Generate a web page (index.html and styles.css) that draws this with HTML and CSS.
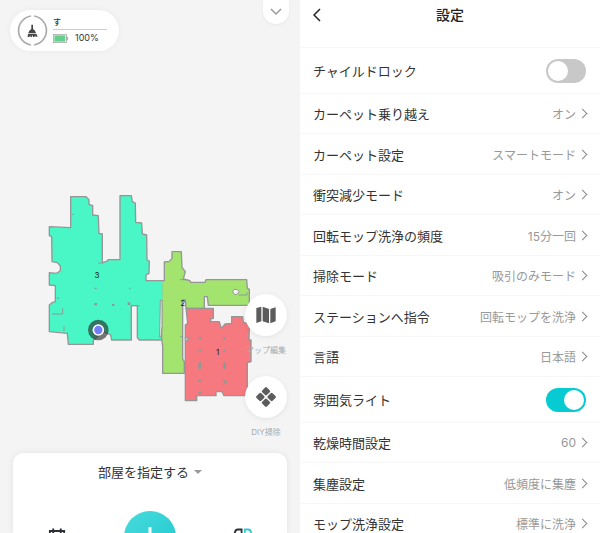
FILE: index.html
```html
<!DOCTYPE html>
<html lang="ja">
<head>
    <meta charset="UTF-8">
    <meta name="viewport" content="width=device-width, initial-scale=1.0">
    <title>設定</title>
    <link rel="stylesheet" href="styles.css">
</head>
<body>
    <!-- Map screen -->
    <section class="map-screen">
        <div class="top-bar">
            <div class="status">
                <svg class="status-ring" viewBox="0 0 93 93" aria-hidden="true">
                    <path d="M42 3A44 44 0 0 0 42 90M51 3A44 44 0 0 1 51 90" fill="none" stroke="#aaa" stroke-width="5"/>
                    <path d="M43 29h5v13l6 5 3 7H34l3-7 6-5z" fill="#444"/>
                    <path d="M33 56h25l4 9h-7v-5l-3 6h-4v-6l-4 6h-4v-6l-3 6h-5z" fill="#444"/>
                </svg>
                <div class="status-info">
                    <div class="status-name">す</div>
                    <div class="status-battery">
                        <svg class="battery" viewBox="0 0 45 27" aria-hidden="true">
                            <rect x="1" y="1" width="39" height="25" fill="#fff" stroke="#999" stroke-width="2"/>
                            <rect x="4" y="4" width="33" height="19" fill="#65d08d"/>
                            <path d="M41 8h3v11h-3z" fill="#888"/>
                        </svg>
                        <span>100%</span>
                    </div>
                </div>
            </div>
            <button class="pull-down" aria-label="開く">
                <svg viewBox="0 0 12 8"><path d="M1 1l5 5 5-5" fill="none" stroke="#999" stroke-width="1.500"/></svg>
            </button>
        </div>

        <div class="map-area">
            <svg class="map" viewBox="0 0 660 660">
                <g stroke="#969696" stroke-width="4" stroke-linejoin="round">
                    <path fill="#48f6c6" d="M92 35H138L147 44V58L158 62V90L175 92L177 145L187 147V233L200 229L205 224H240V32H274L277 50L286 54L287 112L305 114L307 147L320 150L321 225L328 228L327 265L318 270V287H366V465H298L292 458V362H274V465H215L212 450L190 440L160 465V478H85L82 445L28 440V360L36 353L46 350V302L28 300V263L50 265L61 257V243L52 233L36 230L35 155L28 152V125L92 128Z"/>
                    <path fill="#a3e46e" d="M373 231L388 229L396 220V200H424L426 247L436 260L430 282L450 287L452 292H495L498 284H620L622 310L628 313V361H505L502 335H493V370H438L436 345H428V522L433 530V565H368V485L365 460V287H373Z"/>
                    <path fill="#f5797e" d="M438 370H520V400L512 402V410H538L544 430L555 417L575 415V395H608L610 412L623 415L628 427L627 465H633V530L622 533V632H552L546 620H528V632H470V647H436V420L443 415Z"/>
                </g>
                <path fill="#48f6c6" d="M360 289h7v56h-7z"/>
                <path fill="#f4f4f4" stroke="#969696" stroke-width="3" d="M361 346h5v78l-3 32h-4zM578 318l4-5 10 1 5 5-3 7-8 3-5-3zM437 455l7 4v4l-7 5z"/>
                <path fill="none" stroke="#8b9a96" stroke-width="3" d="M36 387H68V370M72 424v14M175 234h15M274 362h24M597 330h24V322M420 284h22M421 455h8M434 459h18"/>
                <g fill="#8b9a96">
                    <path d="M164 308h6v4h-6zM267 308h4v5h-4zM163 354h8v7h-8zM216 357h7v6h-7zM263 352h8v8h-8zM97 86h4v4h-4zM51 337h5v4h-5z"/>
                    <path d="M476 457h9v6h-9zM549 457h8v6h-8zM476 494h8v5h-8zM550 495h7v5h-7zM475 534l8-3v20h-8zM549 534l9-3v20h-8zM475 584h8v7h-8zM549 583l4 1 9 9-4 4-9-9zM475 620h8v7h-8z"/>
                </g>
                <circle cx="175" cy="435" r="31" fill="#222" fill-opacity=".6"/>
                <circle cx="175" cy="435" r="15" fill="#727dfa" stroke="#fff" stroke-width="5"/>
                <text class="room" x="171" y="280">3</text>
                <text class="room" x="428" y="362">2</text>
                <text class="room" x="533" y="511">1</text>
            </svg>

            <div class="tools">
                <button class="tool">
                    <span class="tool-circle">
                        <svg viewBox="0 0 60 50" fill="#5c5c5c"><path d="M1 4L16 0V44L1 49zM20 0L39 7V50L20 44zM43 7L59 2V44L43 50z"/></svg>
                    </span>
                    マップ編集
                </button>
                <button class="tool">
                    <span class="tool-circle">
                        <svg viewBox="0 0 60 60" fill="#5c5c5c">
                            <rect x="20" y="3" width="20" height="20" rx="4" transform="rotate(45 30 13)"/>
                            <rect x="3" y="20" width="20" height="20" rx="4" transform="rotate(45 13 30)"/>
                            <rect x="37" y="20" width="20" height="20" rx="4" transform="rotate(45 47 30)"/>
                            <rect x="20" y="37" width="20" height="20" rx="4" transform="rotate(45 30 47)"/>
                        </svg>
                    </span>
                    DIY掃除
                </button>
            </div>
        </div>

        <div class="card">
            <button class="card-title">部屋を指定する <span class="caret"></span></button>
            <div class="actions">
                <button class="action" aria-label="予約">
                    <svg viewBox="0 0 48 48" fill="none" stroke="#2b2f38" stroke-width="5"><path d="M5 8H43V43H5zM14 1V14M34 1V14"/></svg>
                </button>
                <button class="start" aria-label="開始">
                    <svg viewBox="0 0 20 20"><path d="M10 1V19M1 10H19" stroke="#fff" stroke-width="3" stroke-linecap="round"/></svg>
                </button>
                <button class="action" aria-label="モード">
                    <svg viewBox="0 0 56 48" fill="none" stroke-width="5"><path d="M24 3H13Q6 3 4 16H24zM4 16V44H24V16" stroke="#2b2f38"/><path d="M33 44V3H42Q51 3 51 15T42 27H33" stroke="#35cbd3"/></svg>
                </button>
            </div>
        </div>
    </section>

    <!-- Settings screen -->
    <section class="settings">
        <header class="settings-header">
            <button class="back" aria-label="戻る">
                <svg viewBox="0 0 8 14"><path d="M7 1L1 7l6 6" fill="none" stroke="#222" stroke-width="1.500"/></svg>
            </button>
            <h1>設定</h1>
        </header>
        <ul class="rows">
            <li class="row toggle-row"><label for="childLock">チャイルドロック</label><input type="checkbox" class="toggle" id="childLock"></li>
            <li class="row"><span>カーペット乗り越え</span><button class="value">オン</button></li>
            <li class="row"><span>カーペット設定</span><button class="value">スマートモード</button></li>
            <li class="row"><span>衝突減少モード</span><button class="value">オン</button></li>
            <li class="row"><span>回転モップ洗浄の頻度</span><button class="value">15分一回</button></li>
            <li class="row"><span>掃除モード</span><button class="value">吸引のみモード</button></li>
            <li class="row"><span>ステーションへ指令</span><button class="value">回転モップを洗浄</button></li>
            <li class="row"><span>言語</span><button class="value">日本語</button></li>
            <li class="row toggle-row"><label for="moodLight">雰囲気ライト</label><input type="checkbox" class="toggle" id="moodLight" checked></li>
            <li class="row"><span>乾燥時間設定</span><button class="value">60</button></li>
            <li class="row"><span>集塵設定</span><button class="value">低頻度に集塵</button></li>
            <li class="row"><span>モップ洗浄設定</span><button class="value">標準に洗浄</button></li>
        </ul>
    </section>
</body>
</html>
```
FILE: styles.css
```css
* {
    box-sizing: border-box;
}

body {
    margin: 0;
    height: 100vh;
    overflow: hidden;
    display: grid;
    grid-template-columns: 1fr 1fr;
    grid-template-rows: minmax(0, 1fr);
    font-family: Inter, "Noto Sans CJK JP", sans-serif;
    font-size: 13px;
    color: #333;
    background-color: #fff;
}

button {
    padding: 0;
    border: none;
    background: none;
    font: inherit;
    color: inherit;
    cursor: pointer;
}

svg {
    display: block;
}

/* Map screen */
.map-screen {
    display: flex;
    flex-direction: column;
    min-height: 0;
    overflow: hidden;
    background-color: #f4f4f4;
}

.top-bar {
    display: flex;
    justify-content: space-between;
    align-items: flex-start;
    padding: 0 11px 0 10px;
}

.status {
    display: flex;
    align-items: center;
    gap: 5px;
    margin-top: 10px;
    padding: 5px 12px 5px 7px;
    border-radius: 21px;
    background-color: #fff;
    box-shadow: 0 0 6px rgba(0, 0, 0, 0.05);
}

.status-ring {
    width: 31px;
    height: 31px;
}

.status-info {
    width: 54px;
}

.status-name {
    border-bottom: 1px solid #ccc;
    font-size: 8px;
    font-weight: 500;
    line-height: 14px;
}

.status-battery {
    display: flex;
    align-items: center;
    gap: 7px;
    font-size: 9px;
    line-height: 16px;
}

.battery {
    width: 15px;
    height: 9px;
}

.pull-down {
    display: flex;
    justify-content: center;
    align-items: center;
    width: 26px;
    height: 24px;
    border-radius: 0 0 13px 13px;
    background-color: #fff;
    box-shadow: 0 1px 3px rgba(0, 0, 0, 0.06);
}

.pull-down svg {
    width: 12px;
    height: 8px;
}

.map-area {
    position: relative;
    flex: 1;
    min-height: 0;
    display: flex;
    align-items: flex-end;
    padding: 0 40px 48px;
}

.map {
    width: 100%;
    height: auto;
}

.room {
    font-size: 24px;
    text-anchor: middle;
    fill: #222;
}

/* Buttons over the map */
.tools {
    position: absolute;
    right: 13px;
    bottom: 14px;
    display: flex;
    flex-direction: column;
    gap: 19px;
}

.tool {
    display: flex;
    flex-direction: column;
    align-items: center;
    gap: 8px;
    font-size: 8px;
    line-height: 13px;
    color: #aaa;
}

.tool-circle {
    display: flex;
    justify-content: center;
    align-items: center;
    width: 42px;
    height: 42px;
    border-radius: 50%;
    background-color: #fff;
    box-shadow: 0 1px 5px rgba(0, 0, 0, 0.08);
}

.tool-circle svg {
    width: 20px;
    height: 20px;
}

/* Bottom card */
.card {
    flex-shrink: 0;
    margin: 0 13px;
    height: 80px;
    padding-top: 9px;
    border-radius: 10px 10px 0 0;
    background-color: #fff;
    box-shadow: 0 0 6px rgba(0, 0, 0, 0.08);
}

.card-title {
    display: flex;
    justify-content: center;
    align-items: center;
    gap: 5px;
    width: 100%;
    line-height: 20px;
}

.caret {
    border: 4px solid transparent;
    border-top-color: #999;
    border-bottom: none;
}

.actions {
    display: flex;
    justify-content: space-between;
    align-items: center;
    margin-top: 29px;
    padding: 0 34px;
}

.action svg {
    width: 20px;
    height: 18px;
}

.start {
    display: flex;
    justify-content: center;
    align-items: center;
    width: 52px;
    height: 52px;
    border-radius: 50%;
    background: linear-gradient(135deg, #4adbdc, #1cc8d0);
}

.start svg {
    width: 20px;
    height: 20px;
}

/* Settings screen */
.settings {
    min-height: 0;
    overflow: hidden;
}

.settings-header {
    display: grid;
    grid-template-columns: 14px 1fr 14px;
    align-items: center;
    height: 48px;
    padding: 0 13px 17px;
    border-bottom: 1px solid #f7f7f7;
}

.back svg {
    width: 8px;
    height: 14px;
}

.settings-header h1 {
    margin: 0;
    font-size: 14px;
    font-weight: 500;
    line-height: 20px;
    text-align: center;
    color: #222;
}

.rows {
    margin: 0;
    padding: 0;
    list-style: none;
}

.row {
    display: flex;
    justify-content: space-between;
    align-items: center;
    height: 40px;
    padding: 0 14px 0 13px;
    border-bottom: 1px solid #f7f7f7;
}

.row:nth-child(odd) {
    height: 41px;
}

.row.toggle-row {
    height: 46px;
}

.value {
    display: flex;
    align-items: center;
    gap: 3px;
    font-size: 12px;
    color: #999;
}

.value::after {
    content: "";
    width: 6px;
    height: 6px;
    border: solid #888;
    border-width: 1px 1px 0 0;
    transform: rotate(45deg);
}

.toggle {
    appearance: none;
    display: flex;
    width: 40px;
    height: 24px;
    margin: 0;
    padding: 2px;
    border-radius: 12px;
    background-color: #c8c8c8;
    cursor: pointer;
}

.toggle::before {
    content: "";
    width: 20px;
    height: 20px;
    border-radius: 50%;
    background-color: #fff;
}

.toggle:checked {
    justify-content: flex-end;
    background-color: #06cbd3;
}
```
